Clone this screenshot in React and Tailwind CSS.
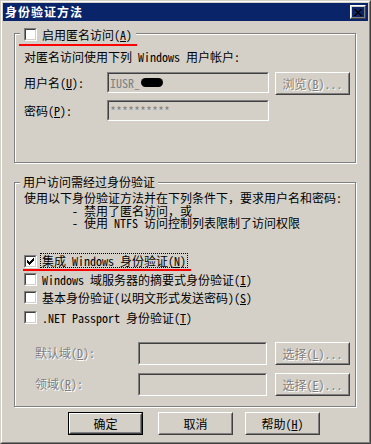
import React from "react";

const dis = "text-[#808080] [text-shadow:1px_1px_0_#fff]";

function Raised({ children, className = "", def = false, disabled = false }) {
  const body = (
    <div className="h-full w-full border border-t-white border-l-white border-b-[#404040] border-r-[#404040]">
      <div className={"h-full w-full border border-t-[#d4d0c8] border-l-[#d4d0c8] border-b-[#808080] border-r-[#808080] flex items-center justify-center leading-none " + (disabled ? dis : "")}>
        {children}
      </div>
    </div>
  );
  if (def) {
    return <div className={"border border-black " + className}>{body}</div>;
  }
  return <div className={className}>{body}</div>;
}

function Sunken({ children, className = "", inner = "bg-[#d4d0c8]" }) {
  return (
    <div className={"border border-t-[#808080] border-l-[#808080] border-b-white border-r-white " + className}>
      <div className={"h-full w-full border border-t-[#404040] border-l-[#404040] border-b-[#d4d0c8] border-r-[#d4d0c8] " + inner}>
        {children}
      </div>
    </div>
  );
}

function Check({ checked = false }) {
  return (
    <Sunken className="w-[13px] h-[13px] shrink-0" inner="bg-white flex items-center justify-center">
      {checked && (
        <svg width="7" height="7" viewBox="0 0 7 7" shapeRendering="crispEdges">
          <path d="M6 0h1v3h-1zM5 1h1v3h-1zM4 2h1v3h-1zM3 3h1v3h-1zM2 4h1v3h-1zM1 3h1v3h-1zM0 2h1v3h-1z" fill="#000" />
        </svg>
      )}
    </Sunken>
  );
}

function Group({ className = "", children }) {
  return (
    <div className={"relative border border-[#808080] shadow-[inset_1px_1px_0_#fff,1px_1px_0_#fff] " + className}>
      {children}
    </div>
  );
}

export default function App() {
  return (
    <div className="w-[371px] h-[444px] bg-[#d4d0c8] border border-t-[#d4d0c8] border-l-[#d4d0c8] border-b-[#404040] border-r-[#404040] font-['Noto_Sans_Mono_CJK_SC','Noto_Sans_CJK_SC',sans-serif] text-[12px] text-black select-none">
      <div className="h-full border border-t-white border-l-white border-b-[#808080] border-r-[#808080] p-px flex flex-col">
        {/* Title bar */}
        <div className="h-[18px] bg-[#0a246a] flex items-center justify-between pl-[2px] pr-[2px] shrink-0">
          <span className="text-white font-bold text-[12px] tracking-[1px] leading-none">身份验证方法</span>
          <Raised className="w-[16px] h-[14px]">
            <svg width="8" height="7" viewBox="0 0 8 7" shapeRendering="crispEdges">
              <path d="M0 0h2v1h-2zM6 0h2v1h-2zM1 1h2v1h-2zM5 1h2v1h-2zM2 2h4v1h-4zM3 3h2v1h-2zM2 4h4v1h-4zM1 5h2v1h-2zM5 5h2v1h-2zM0 6h2v1h-2zM6 6h2v1h-2z" fill="#000" />
            </svg>
          </Raised>
        </div>

        {/* Content */}
        <div className="flex-1 pl-[11px] pr-[12px] flex flex-col">
          {/* Group 1 */}
          <Group className="mt-[12px] h-[130px] shrink-0">
            <div className="absolute left-[5px] -top-[6px] h-[13px] pl-[4px] pr-[4px] bg-[#d4d0c8] flex items-center gap-[5px]">
              <Check />
              <span className="leading-[13px]">启用匿名访问(<span className="underline">A</span>)</span>
            </div>
            <div className="absolute left-[4px] top-[10px] w-[118px] h-[2px] bg-[#ff0000]" />
            <div className="pl-[9px] pt-[17px] flex flex-col">
              <div className="h-[12px] leading-[12px]">对匿名访问使用下列 Windows 用户帐户:</div>
              <div className="mt-[9px] h-[23px] flex items-start">
                <div className="w-[83px] leading-[21px]">用户名(<span className="underline">U</span>):</div>
                <Sunken className="w-[162px] h-[21px]">
                  <div className={"h-full flex items-center pl-[1px] leading-none " + "text-[#808080]"}>
                    IUSR_<span className="inline-block w-[22px] h-[9px] rounded-full bg-black ml-[1px]" />
                  </div>
                </Sunken>
                <Raised className="ml-[6px] w-[75px] h-[23px]" disabled>
                  浏览(<span className="underline">B</span>)...
                </Raised>
              </div>
              <div className="mt-[5px] h-[21px] flex items-start">
                <div className="w-[83px] leading-[21px]">密码(<span className="underline">P</span>):</div>
                <Sunken className="w-[162px] h-[21px]">
                  <div className="h-full flex items-center pl-[1px] leading-none text-[#808080]">**********</div>
                </Sunken>
              </div>
            </div>
          </Group>

          {/* Group 2 */}
          <Group className="mt-[19px] h-[225px] shrink-0">
            <div className="absolute left-[5px] -top-[8px] h-[14px] px-[3px] bg-[#d4d0c8] leading-[14px]">用户访问需经过身份验证</div>
            <div className="absolute left-[8px] top-[86px] w-[168px] h-[2px] bg-[#ff0000]" />
            <div className="pl-[9px] pt-[9px] flex flex-col">
              <div className="h-[13px] leading-[12px]">使用以下身份验证方法并在下列条件下，要求用户名和密码:</div>
              <div className="h-[12px] leading-[12px] pl-[48px]">- 禁用了匿名访问，或</div>
              <div className="h-[12px] leading-[12px] pl-[48px]">- 使用 NTFS 访问控制列表限制了访问权限</div>

              <div className="mt-[23px] h-[18px] flex items-start">
                <div className="mt-[3px]"><Check checked /></div>
                <span className="ml-[3px] mt-[1px] border border-dotted border-black px-[1px] h-[15px] leading-[13px]">集成 Windows 身份验证(<span className="underline">N</span>)</span>
              </div>
              <div className="h-[18px] flex items-start">
                <div className="mt-[3px]"><Check /></div>
                <span className="ml-[5px] leading-[19px]">Windows 域服务器的摘要式身份验证(<span className="underline">I</span>)</span>
              </div>
              <div className="h-[20px] flex items-start">
                <div className="mt-[3px]"><Check /></div>
                <span className="ml-[5px] leading-[19px]">基本身份验证(以明文形式发送密码)(<span className="underline">S</span>)</span>
              </div>
              <div className="h-[18px] flex items-start">
                <div className="mt-[3px]"><Check /></div>
                <span className="ml-[5px] leading-[19px]">.NET Passport 身份验证(<span className="underline">T</span>)</span>
              </div>

              <div className="mt-[16px] h-[23px] flex items-start">
                <div className={"w-[114px] pl-[11px] leading-[22px] " + dis}>默认域(<span className="underline">D</span>):</div>
                <Sunken className="w-[129px] h-[23px]" />
                <Raised className="ml-[8px] w-[75px] h-[23px]" disabled>
                  选择(<span className="underline">L</span>)...
                </Raised>
              </div>
              <div className="mt-[8px] h-[23px] flex items-start">
                <div className={"w-[114px] pl-[11px] leading-[22px] " + dis}>领域(<span className="underline">R</span>):</div>
                <Sunken className="w-[129px] h-[23px]" />
                <Raised className="ml-[8px] w-[75px] h-[23px]" disabled>
                  选择(<span className="underline">E</span>)...
                </Raised>
              </div>
            </div>
          </Group>

          {/* Bottom buttons */}
          <div className="mt-[5px] flex items-start">
            <Raised def className="ml-[54px] w-[75px] h-[23px]">确定</Raised>
            <Raised className="ml-[15px] w-[75px] h-[23px]">取消</Raised>
            <Raised className="ml-[12px] w-[75px] h-[23px]">帮助(<span className="underline">H</span>)</Raised>
          </div>
        </div>
      </div>
    </div>
  );
}
